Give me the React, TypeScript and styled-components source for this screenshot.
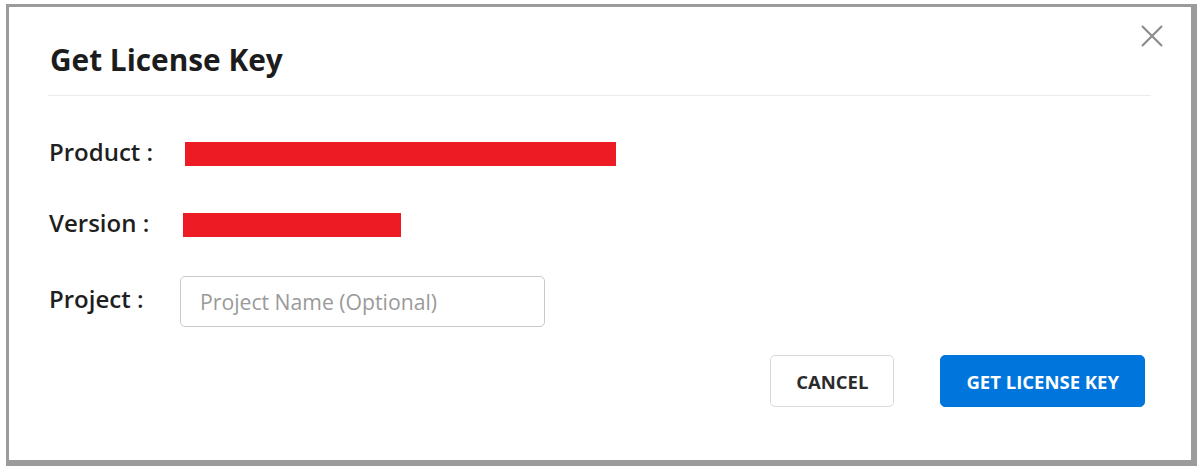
import React from "react";
import styled, { createGlobalStyle } from "styled-components";

const GlobalStyle = createGlobalStyle`
  html, body {
    margin: 0;
    padding: 0;
    background: #ffffff;
  }
  body {
    font-family: "Open Sans", "Liberation Sans", sans-serif;
    color: #1f1f1f;
  }
`;

const Page = styled.div`
  width: 1202px;
  height: 474px;
  padding: 4px 0 0 6px;
  box-sizing: border-box;
`;

const Frame = styled.div`
  position: relative;
  width: 1191px;
  height: 462px;
  box-sizing: border-box;
  border-style: solid;
  border-color: #9b9b9b;
  border-width: 3px 6px 6px 3px;
  background: #ffffff;
  padding: 0 40px 0 39px;
`;

const Header = styled.div`
  padding: 33px 0 15px 2px;
  border-bottom: 1px solid #ebebeb;
`;

const Title = styled.h2`
  margin: 0;
  font-size: 29.8px;
  line-height: 40px;
  font-weight: 700;
  color: #1c1c1c;
`;

const CloseButton = styled.button`
  position: absolute;
  top: 16px;
  right: 26px;
  width: 26px;
  height: 26px;
  padding: 0;
  border: none;
  background: transparent;
  cursor: pointer;
  display: flex;
  align-items: center;
  justify-content: center;
`;

const Fields = styled.div`
  display: flex;
  flex-direction: column;
  padding-left: 1px;
`;

const Row = styled.div<{ $top: number; $height: number }>`
  display: flex;
  align-items: center;
  margin-top: ${(p) => p.$top}px;
  height: ${(p) => p.$height}px;
`;

const Label = styled.div`
  width: 131px;
  flex: none;
  margin-bottom: 5px;
  font-size: 24px;
  line-height: 26px;
  font-weight: 600;
  color: #1f1f1f;
`;

const Redacted = styled.div<{ $width: number; $offset: number }>`
  width: ${(p) => p.$width}px;
  height: 24px;
  margin-left: ${(p) => p.$offset}px;
  background: #ed1c24;
`;

const Input = styled.input`
  width: 365px;
  height: 51px;
  box-sizing: border-box;
  border: 1px solid #c9c9c9;
  border-radius: 5px;
  padding: 0 19px;
  font-family: "Open Sans", "Liberation Sans", sans-serif;
  font-size: 21.2px;
  color: #333;
  outline: none;

  &::placeholder {
    color: #9a9a9a;
  }
`;

const Actions = styled.div`
  display: flex;
  justify-content: flex-end;
  gap: 46px;
  margin-top: 28px;
  padding-right: 6px;
`;

const Button = styled.button<{ $primary?: boolean }>`
  height: 52px;
  padding: 0 25px;
  box-sizing: border-box;
  border-radius: 5px;
  border: 1px solid ${(p) => (p.$primary ? "#0075dc" : "#d9d9d9")};
  background: ${(p) => (p.$primary ? "#0075dc" : "#ffffff")};
  color: ${(p) => (p.$primary ? "#ffffff" : "#2b2b2b")};
  font-family: "Open Sans", "Liberation Sans", sans-serif;
  font-size: 18.5px;
  font-weight: 700;
  cursor: pointer;
`;

const App = () => {
  return (
    <>
      <GlobalStyle />
      <Page>
        <Frame>
          <Header>
            <Title>Get License Key</Title>
          </Header>
          <CloseButton aria-label="Close">
            <svg width="22" height="22" viewBox="0 0 22 22">
              <path
                d="M1 1 L21 21 M21 1 L1 21"
                stroke="#8c8c8c"
                strokeWidth="2.2"
                fill="none"
              />
            </svg>
          </CloseButton>
          <Fields>
            <Row $top={45} $height={26}>
              <Label>Product :</Label>
              <Redacted $width={431} $offset={5} />
            </Row>
            <Row $top={45} $height={26}>
              <Label>Version :</Label>
              <Redacted $width={218} $offset={3} />
            </Row>
            <Row $top={38} $height={51}>
              <Label>Project :</Label>
              <Input placeholder="Project Name (Optional)" />
            </Row>
          </Fields>
          <Actions>
            <Button>CANCEL</Button>
            <Button $primary>GET LICENSE KEY</Button>
          </Actions>
        </Frame>
      </Page>
    </>
  );
};

export default App;
